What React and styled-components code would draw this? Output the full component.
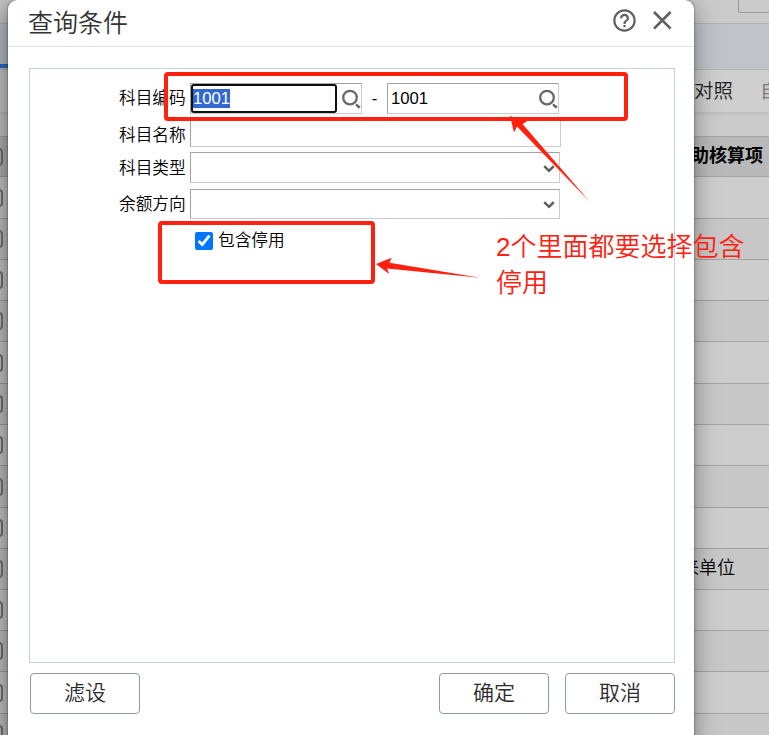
import React from 'react'
import styled, { createGlobalStyle } from 'styled-components';

import { MdHelpOutline } from 'react-icons/md';

const GlobalStyle = createGlobalStyle`
  * {
    box-sizing: border-box;
  }
  body {
    margin: 0;
    overflow: hidden;
    font-family: "Liberation Sans", "Noto Sans CJK SC", sans-serif;
    color: #000;
  }
`

const Screen = styled.div`
  position: relative;
  width: 769px;
  height: 735px;
  overflow: hidden;
  background-color: #cbcbcb;
`

/* page behind the dialog */

const Backdrop = styled.div`
  display: flex;
  flex-direction: column;
  height: 735px;

  > * {
    flex-shrink: 0;
  }
`

const TopBar = styled.div`
  height: 24px;
  border-bottom: 1px solid #b1b1b1;
  display: flex;
  justify-content: flex-end;
`

const TopBox = styled.div`
  width: 31px;
  height: 13px;
  border: solid #9b9b9b;
  border-width: 0 0 1px 1px;
  border-bottom-left-radius: 3px;
`

const TabBar = styled.div`
  height: 46px;
  background-color: #c0c4ca;
  border-bottom: 1px solid #b6b6b6;
  display: flex;
  align-items: flex-end;
`

const ActiveTab = styled.div`
  width: 60px;
  height: 4px;
  margin-bottom: 1px;
  background-color: #2c6fd0;
`

const Toolbar = styled.div`
  height: 42px;
  padding-bottom: 4px;
  background-color: #cecece;
  display: flex;
  justify-content: flex-end;
  align-items: center;
  gap: 27px;
  font-size: 19.5px;
  font-weight: 350;
  white-space: nowrap;
  color: #1c1c1c;
  box-shadow: 0 2px 3px rgba(0, 0, 0, 0.08);
`

const ToolItem = styled.span`
  ${p => p.$cut && 'width: 9px; overflow: hidden; color: #777;'}
`

const Table = styled.div`
  margin-top: 24px;
  border-top: 1px solid #a5a5a5;
`

const Line = styled.div`
  height: ${p => p.$h}px;
  padding-right: ${p => p.$end || 0}px;
  background-color: ${p => p.$bg};
  border-bottom: 1px solid #a3a3a3;
  display: flex;
  align-items: center;
  justify-content: space-between;
  font-size: 18px;
  line-height: 24px;
  font-weight: ${p => (p.$bold ? 700 : 350)};
  white-space: nowrap;
`

const CellText = styled.span`
  padding-bottom: 2px;
`

const RowCheck = styled.div`
  width: 18px;
  height: 18px;
  margin-left: -15px;
  border: 2px solid #757575;
  border-radius: 4px;
`

/* dialog */

const Dialog = styled.div`
  position: absolute;
  top: 0;
  left: 8px;
  width: 686px;
  height: 760px;
  background-color: #fff;
  border-radius: 9px 9px 0 0;
  box-shadow: 0 0 2px rgba(0, 0, 0, 0.6), -3px 5px 26px rgba(0, 0, 0, 0.5);
`

const Header = styled.div`
  height: 47px;
  padding: 0 20px 6px 20px;
  border-bottom: 1px solid #e2e4e6;
  display: flex;
  align-items: center;
  justify-content: space-between;
`

const Title = styled.div`
  font-size: 25px;
  line-height: 40px;
  font-weight: 350;
  color: #333;
  padding-top: 6px;
`

const HeaderIcons = styled.div`
  display: flex;
  align-items: center;
  gap: 14px;
  color: #606060;

  svg {
    display: block;
  }
`

const Panel = styled.div`
  width: 646px;
  height: 595px;
  margin: 21px 0 0 21px;
  padding-top: 14px;
  border: 1px solid #c3d2de;
  display: flex;
  flex-direction: column;
`

const Row = styled.div`
  display: flex;
  align-items: center;
  height: ${p => p.$h}px;
  margin-bottom: ${p => p.$gap || 0}px;
  font-size: 16.7px;
`

const Label = styled.label`
  width: 160px;
  padding-left: 89px;
  padding-top: ${p => p.$drop || 0}px;
  line-height: 24px;
  font-weight: 350;
  white-space: nowrap;
`

const Field = styled.div`
  width: ${p => p.$w}px;
  height: 100%;
  border: 1px solid #cbcbcb;
  border-top-color: #a3a3a3;
  border-left-color: #a3a3a3;
  display: flex;
  align-items: center;
  justify-content: space-between;

  svg {
    margin-right: -1px;
  }
`

const Focused = styled.div`
  width: 146px;
  height: 29px;
  border: 2px solid #101010;
  border-radius: 3px;
  display: flex;
  align-items: center;
`

const Selected = styled.span`
  line-height: 19px;
  background-color: #3367d1;
  color: #fff;
`

const Value = styled.span`
  padding-left: 3px;
`

const Dash = styled.span`
  width: 25px;
  text-align: center;
`

const CheckRow = styled.label`
  display: flex;
  align-items: center;
  gap: 5px;
  height: 24px;
  margin: 10px 0 0 165px;
  font-size: 16.7px;
  font-weight: 350;
`

const CheckText = styled.span`
  padding-bottom: 4px;
`

const Check = styled.input`
  width: 18px;
  height: 18px;
  margin: 0;
`

const Footer = styled.div`
  display: flex;
  gap: 16px;
  padding: 10px 19px 0 22px;
`

const Button = styled.button`
  width: 110px;
  height: 41px;
  padding: 0 0 5px;
  margin-right: ${p => (p.$first ? 'auto' : 0)};
  border: 1px solid #8c9ab0;
  border-radius: 4px;
  background-color: #fff;
  font-family: "Liberation Sans", "Noto Sans CJK SC", sans-serif;
  font-size: 21px;
  font-weight: 350;
  color: #2a2a2a;
`

/* red notes drawn over everything */

const Frame = styled.div`
  position: absolute;
  left: ${p => p.$x}px;
  top: ${p => p.$y}px;
  width: ${p => p.$w}px;
  height: ${p => p.$h}px;
  border: 4px solid #ff2010;
  border-radius: 4px;
`

const Arrows = styled.svg`
  position: absolute;
  left: 0;
  top: 0;
`

const Note = styled.div`
  position: absolute;
  left: 496px;
  top: 230px;
  font-size: 26px;
  line-height: 35.5px;
  font-weight: 350;
  white-space: nowrap;
  color: #ff2010;
`

const Search = () => (
  <svg width="24" height="28" viewBox="0 0 24 28" fill="none" stroke="#686868">
    <circle cx="12" cy="12.6" r="6.8" strokeWidth="2.3" />
    <path d="M18 19.4 L21.8 22.8" strokeWidth="2.6" />
  </svg>
)

const Chevron = () => (
  <svg width="22" height="28" viewBox="0 0 22 28" fill="none" stroke="#5c5c5c" strokeWidth="2.5">
    <path d="M6.2 12.2 L11 16.8 L15.8 12.2" />
  </svg>
)

const rows = [42, 41, 41, 41, 42, 41, 41, 42, 41, 41, 41, 41, 42, 41];

export default () => {
  return (
    <Screen>
      <GlobalStyle />
      <Backdrop>
        <TopBar><TopBox /></TopBar>
        <TabBar><ActiveTab /></TabBar>
        <Toolbar>
          <ToolItem>对照</ToolItem>
          <ToolItem $cut>自</ToolItem>
        </Toolbar>
        <Table>
          <Line $h={40} $bg="#b9b9b9" $end={6} $bold>
            <RowCheck />
            <CellText>辅助核算项</CellText>
          </Line>
          {rows.map((h, i) => (
            <Line key={i} $h={h} $end={34} $bg={i % 2 ? '#c7c7c7' : '#cdcdcd'}>
              <RowCheck />
              {i === 9 && <CellText>往来单位</CellText>}
            </Line>
          ))}
        </Table>
      </Backdrop>

      <Dialog>
        <Header>
          <Title>查询条件</Title>
          <HeaderIcons>
            <MdHelpOutline size={27} />
            <svg width="22" height="20" viewBox="0 0 22 20" stroke="currentColor" strokeWidth="2.7">
              <path d="M2 2 L18.6 18.6 M18.6 2 L2 18.6" />
            </svg>
          </HeaderIcons>
        </Header>
        <Panel>
          <Row $h={31} $gap={4}>
            <Label>科目编码</Label>
            <Field $w={172}>
              <Focused><Selected>1001</Selected></Focused>
              <Search />
            </Field>
            <Dash>-</Dash>
            <Field $w={172}>
              <Value>1001</Value>
              <Search />
            </Field>
          </Row>
          <Row $h={29} $gap={5}>
            <Label $drop={7}>科目名称</Label>
            <Field $w={371} />
          </Row>
          <Row $h={31} $gap={6}>
            <Label $drop={2}>科目类型</Label>
            <Field $w={370}>
              <span />
              <Chevron />
            </Field>
          </Row>
          <Row $h={30}>
            <Label $drop={2}>余额方向</Label>
            <Field $w={370}>
              <span />
              <Chevron />
            </Field>
          </Row>
          <CheckRow>
            <Check type="checkbox" defaultChecked />
            <CheckText>包含停用</CheckText>
          </CheckRow>
        </Panel>
        <Footer>
          <Button $first>滤设</Button>
          <Button>确定</Button>
          <Button>取消</Button>
        </Footer>
      </Dialog>

      <Frame $x={164} $y={72} $w={464} $h={49} />
      <Frame $x={158} $y={221} $w={217} $h={63} />
      <Arrows width="769" height="735" fill="#ff2010">
        <path d="M510 116 L527 121.5 L522.5 124 L590 202 L517 126.5 L514 132.5 Z" />
        <path d="M376 264 L391.5 257.7 L389.5 262.7 L480 277.7 L387 268.5 L389.3 274 Z" />
      </Arrows>
      <Note>2个里面都要选择包含<br />停用</Note>
    </Screen>
  );
}
